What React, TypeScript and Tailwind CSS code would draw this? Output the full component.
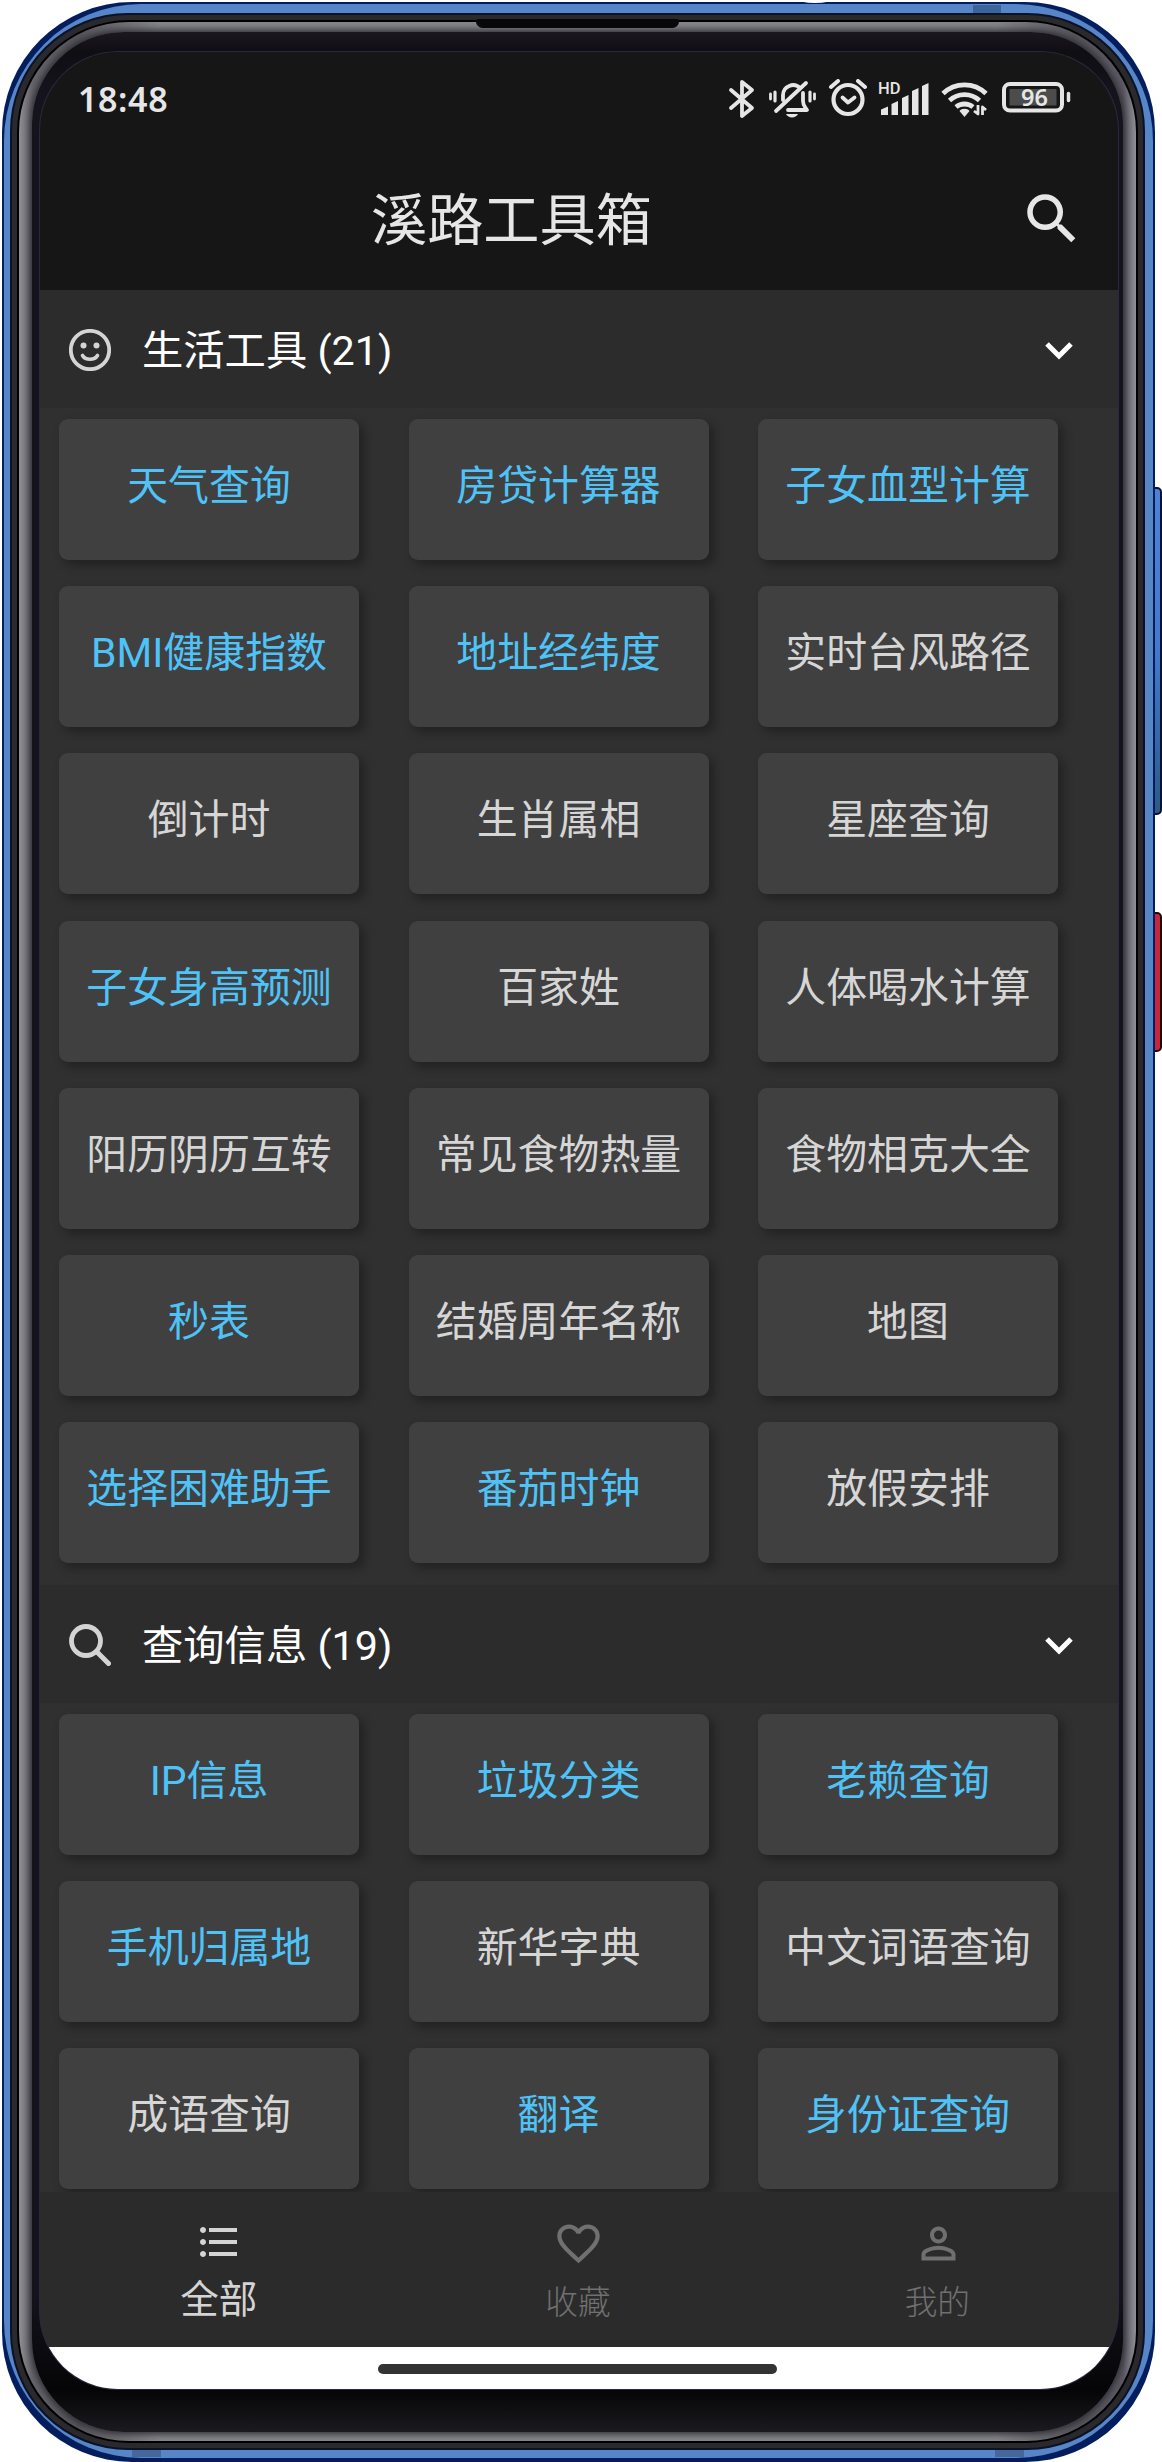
import React from "react";
import {
  MdFavoriteBorder,
  MdFormatListBulleted,
  MdPersonOutline,
  MdSearch,
} from "react-icons/md";

type Tool = [string, boolean];

const lifeTools: Tool[] = [
  ["天气查询", true],
  ["房贷计算器", true],
  ["子女血型计算", true],
  ["BMI健康指数", true],
  ["地址经纬度", true],
  ["实时台风路径", false],
  ["倒计时", false],
  ["生肖属相", false],
  ["星座查询", false],
  ["子女身高预测", true],
  ["百家姓", false],
  ["人体喝水计算", false],
  ["阳历阴历互转", false],
  ["常见食物热量", false],
  ["食物相克大全", false],
  ["秒表", true],
  ["结婚周年名称", false],
  ["地图", false],
  ["选择困难助手", true],
  ["番茄时钟", true],
  ["放假安排", false],
];

const queryTools: Tool[] = [
  ["IP信息", true],
  ["垃圾分类", true],
  ["老赖查询", true],
  ["手机归属地", true],
  ["新华字典", false],
  ["中文词语查询", false],
  ["成语查询", false],
  ["翻译", true],
  ["身份证查询", true],
];

function StatusIcons() {
  return (
    <svg
      width="345"
      height="42"
      viewBox="0 0 345 42"
      fill="none"
      stroke="#e6e6e6"
      strokeLinecap="round"
      strokeLinejoin="round"
    >
      {/* bluetooth */}
      <path d="M3 11 24 29 14 37V3L24 11 3 29" strokeWidth="3.8" />
      {/* muted bell */}
      <g strokeWidth="3.8">
        <path d="M55 21V16a10 10 0 0 1 17-7M75 14v8c0 5 2 6 4 9H60" />
        <path d="M78 4 48 32" />
        <path d="M47 13v9M82 13v9" strokeWidth="3.2" />
        <path d="M42.500 15v5M86.500 15v5" strokeWidth="2.8" />
      </g>
      <path d="M58 35h12c-2 4.500-10 4.500-12 0Z" fill="#e6e6e6" stroke="none" />
      {/* alarm clock */}
      <circle cx="120" cy="20.500" r="14.500" strokeWidth="4.200" />
      <path d="m114.500 18.500 5.500 5 6.500-5" strokeWidth="3.800" />
      <path d="m103 8 7-6M137 8l-7-6" strokeWidth="4" />
      {/* cellular signal */}
      <g fill="#e6e6e6" stroke="none">
        <path d="M153 30.500l7-3V36h-7zM163.500 25l6.500-3v14h-6.500zM174 19l6.500-3v20H174zM184 12l6.500-3v27H184zM194 7l6.500-3v32H194z" />
        <text x="150" y="15" fontSize="16.500" fontFamily="Roboto, sans-serif" fontWeight="500">
          HD
        </text>
      </g>
      {/* wifi */}
      <g strokeWidth="4.800" strokeLinecap="butt">
        <path d="M215 14.500a31 31 0 0 1 43 0" />
        <path d="M221.500 21.500a22 22 0 0 1 30 0" />
        <path d="M228 28a13.500 13.500 0 0 1 17 0" />
      </g>
      <path d="M231.500 32c2-3 8-3 10 0l-5 6z" fill="#e6e6e6" stroke="none" />
      <path d="M250 26v9l-4-3M254.500 36v-8l3.500 3" strokeWidth="2.800" strokeLinecap="butt" />
      {/* battery */}
      <rect x="276" y="5" width="58" height="26.500" rx="6" strokeWidth="4" />
      <rect x="281.500" y="10" width="47" height="16.500" fill="#4c4c4c" stroke="none" />
      <path d="M340.500 14.500v7" strokeWidth="3.500" />
      <text
        x="306.500"
        y="27"
        textAnchor="middle"
        fontSize="23.500"
        fontWeight="600"
        fontFamily="'Noto Sans', sans-serif"
        fill="#e6e6e6"
        stroke="none"
      >
        96
      </text>
    </svg>
  );
}

function SmileIcon() {
  return (
    <svg width="42" height="42" viewBox="0 0 42 42" fill="none" stroke="#d4d4d4">
      <circle cx="21" cy="21" r="19.200" strokeWidth="3.800" />
      <circle cx="14.500" cy="16.500" r="3" fill="#d4d4d4" stroke="none" />
      <circle cx="27.500" cy="16.500" r="3" fill="#d4d4d4" stroke="none" />
      <path d="M13.500 26.500c3 5 12 5 15 0" strokeWidth="3.600" strokeLinecap="round" />
    </svg>
  );
}

function LensIcon() {
  return (
    <svg width="42" height="42" viewBox="0 0 42 42" fill="none" stroke="#d4d4d4">
      <circle cx="17" cy="17" r="14.500" strokeWidth="4.800" />
      <path d="m28 28 11.500 11.500" strokeWidth="5" strokeLinecap="round" />
    </svg>
  );
}

function SectionHeader({ icon, title }: { icon: React.ReactNode; title: string }) {
  return (
    <div className="flex h-[118px] items-center bg-[#2c2c2c] pt-px pr-[44px] pl-[29px]">
      {icon}
      <h2 className="ml-[31px] flex-1 pt-[5px] text-[41.300px] leading-none text-white">{title}</h2>
      <svg width="30" height="20" viewBox="0 0 30 20" fill="none">
        <path d="m3 4 12 12L27 4" stroke="#fff" strokeWidth="5" />
      </svg>
    </div>
  );
}

function ToolGrid({ tools }: { tools: Tool[] }) {
  return (
    <div className="grid grid-cols-[300px_300px_300px] gap-x-[49.500px] gap-y-[26.200px] pt-[11px] pl-[19px]">
      {tools.map(([name, used]) => (
        <button
          key={name}
          className={
            "flex h-[141px] items-center justify-center rounded-[9px] bg-[#404040] pb-[6px] text-[40.900px] leading-none whitespace-nowrap shadow-[5px_5px_10px_1px_rgba(0,0,0,0.28)] " +
            (used ? "text-[#4fc3f7]" : "text-[#d6d6d6]")
          }
        >
          {name}
        </button>
      ))}
    </div>
  );
}

function Screen() {
  return (
    <div className="flex h-[2337px] flex-col overflow-hidden rounded-[78px] bg-[#303030] shadow-[0_0_0_1px_#2c2740]">
      <header className="flex h-[238px] shrink-0 flex-col bg-[#161616]">
        <div className="flex h-[100px] items-start justify-between pt-[27px] pr-[45px] pl-[38px]">
          <span className="font-['Noto_Sans'] text-[34px] leading-[40px] font-semibold tracking-[0.600px] text-[#e6e6e6]">
            18:48
          </span>
          <StatusIcons />
        </div>
        <div className="flex h-[138px] items-start justify-between pr-[33px] pl-[331px] text-[#e6e6e6]">
          <h1 className="mt-[41px] text-[56.200px] leading-none">溪路工具箱</h1>
          <MdSearch className="mt-[34px] size-[66px]" />
        </div>
      </header>
      <main className="h-[1902px] shrink-0 overflow-hidden">
        <section className="h-[1295px]">
          <SectionHeader icon={<SmileIcon />} title="生活工具 (21)" />
          <ToolGrid tools={lifeTools} />
        </section>
        <section>
          <SectionHeader icon={<LensIcon />} title="查询信息 (19)" />
          <ToolGrid tools={queryTools} />
        </section>
      </main>
      <nav className="grid h-[155px] shrink-0 grid-cols-3 bg-[#2b2b2b] font-light text-[#707070]">
        <a className="flex flex-col items-center pt-[26px] pr-[2px] text-[#d4d4d4]">
          <MdFormatListBulleted className="size-[48px]" />
          <span className="mt-[15px] text-[38.500px] leading-none font-normal">全部</span>
        </a>
        <a className="flex flex-col items-center pt-[26px]">
          <MdFavoriteBorder className="size-[51px]" />
          <span className="mt-[18px] mr-[2px] text-[32.700px] leading-none">收藏</span>
        </a>
        <a className="flex flex-col items-center pt-[26px]">
          <MdPersonOutline className="size-[51px]" />
          <span className="mt-[18px] mr-[2px] text-[32.700px] leading-none">我的</span>
        </a>
      </nav>
      <footer className="flex h-[42px] shrink-0 justify-center bg-white pt-[17px] pr-[3px]">
        <div className="h-[10px] w-[399px] rounded-full bg-[#333333]" />
      </footer>
    </div>
  );
}

export default function App() {
  return (
    <div className="relative h-[2462px] w-[1162px] overflow-hidden bg-white pt-[2px] pl-[2px] font-[Roboto,'Noto_Sans_CJK_SC',sans-serif]">
      {/* volume and power buttons */}
      <div className="absolute top-[487px] left-[1150px] h-[328px] w-[12px] rounded-r-[5px] border-2 border-[#071331] bg-linear-to-b from-[#4d82d6] via-[#4478cc] to-[#2f5a85]" />
      <div className="absolute top-[912px] left-[1150px] h-[140px] w-[12px] rounded-r-[5px] border-2 border-[#1d060c] bg-[#c5283d]" />

      {/* metal frame, from the outer edge inwards */}
      <div className="relative h-[2460px] w-[1153px] rounded-[130px] bg-[#041d5c] pt-[2px] pr-[2px] pb-[4px] pl-[2px]">
        <div className="h-full rounded-[137px] bg-[#5686c8] pt-[9px] pr-[8px] pb-[8px] pl-[6px]">
          <div className="h-full rounded-[118px] border-[2px] border-[#0c1226] bg-[#2a2a2e] p-[5px]">
            <div className="h-full rounded-[112px] bg-black p-[2px]">
              <div className="h-full rounded-[110px] bg-[linear-gradient(to_right,#8f8f94_0,#66666c_13px,#55555b_60px,#85868a_140px,#85868a_calc(100%-140px),#55555b_calc(100%-60px),#5c5964_calc(100%-13px),#8f8f94_100%)] pt-[10px] pr-[13px] pb-[9px] pl-[13px]">
                <div className="h-full rounded-[92px] bg-[linear-gradient(to_bottom,#1c181f_0,#0f0e13_20px,#15131c_60px,#15131c_calc(100%-140px),#050507_calc(100%-42px),#1b1a1f_100%)] pt-[20px] pr-[5px] pl-[8px] shadow-[0_0_7px_2px_#2c2a31]">
                  <Screen />
                </div>
              </div>
            </div>
          </div>
        </div>
        {/* earpiece */}
        <div className="absolute top-[17px] left-[474px] h-[9px] w-[203px] rounded-b-[8px] rounded-t-[3px] bg-[#08080a]" />
        {/* antenna bands */}
        <div className="absolute top-[3px] left-[971px] h-[8px] w-[28px] bg-[#3d639b]" />
        <div className="absolute bottom-[5px] left-[130px] h-[7px] w-[29px] bg-[#45679c]" />
        <div className="absolute bottom-[5px] left-[993px] h-[7px] w-[29px] bg-[#45679c]" />
      </div>
      <div className="absolute top-[-5px] left-[797px] h-[8px] w-[36px] rounded-[50%] bg-white" />
    </div>
  );
}
